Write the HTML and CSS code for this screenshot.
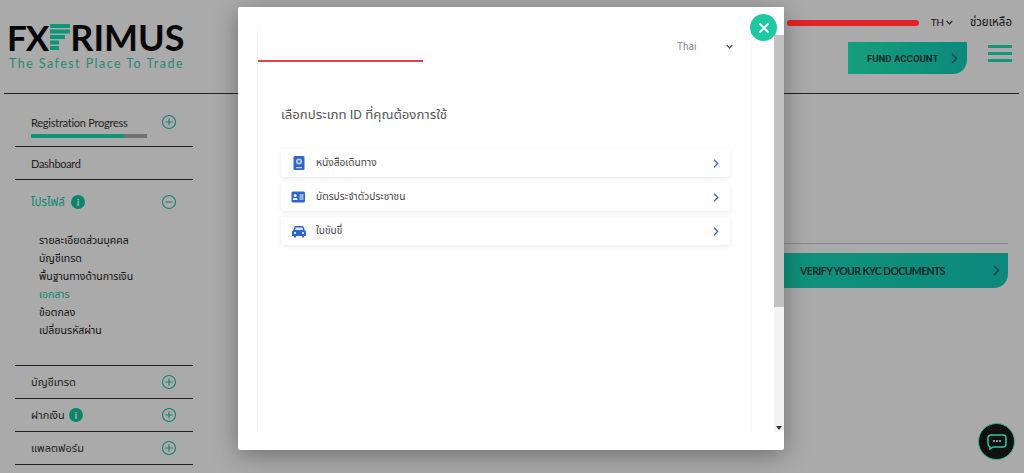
FILE: index.html
```html
<!DOCTYPE html>
<html lang="th">
<head>
<meta charset="utf-8">
<title>FXPRIMUS</title>
<link rel="stylesheet" href="styles.css">
</head>
<body>
<div class="page">
  <header class="topbar">
    <div class="logo">
      <div class="logo-mark">
        <span class="fx">FX</span>
        <svg class="logo-f" viewBox="0 0 20 26" width="20" height="26"><g fill="#17e0b4"><rect x="0" y="0" width="20" height="4"/><rect x="0" y="5.5" width="20" height="4"/><rect x="0" y="11" width="15" height="4"/><rect x="0" y="16.500" width="9" height="4"/><rect x="0" y="22" width="9" height="4"/></g></svg>
        <span class="rimus">RIMUS</span>
      </div>
      <div class="tagline">The Safest Place To Trade</div>
    </div>
    <div class="top-right">
      <div class="top-links">
        <span class="lang">TH <svg width="7" height="5" viewBox="0 0 7 5"><path d="M.7 1l2.800 2.800L6.300 1" fill="none" stroke="#333" stroke-width="1.200"/></svg></span>
        <span class="help">ช่วยเหลือ</span>
      </div>
      <div class="top-actions">
        <a class="fund">FUND ACCOUNT <svg width="7" height="11" viewBox="0 0 7 11"><path d="M1 1l4.500 4.500L1 10" fill="none" stroke="#0c6d72" stroke-width="1.500"/></svg></a>
        <div class="burger"><i></i><i></i><i></i></div>
      </div>
    </div>
  </header>
  <div class="body">
    <nav class="side">
      <div class="row row-progress">
        <div class="row-head"><span>Registration Progress</span><svg class="tog" viewBox="0 0 16 16"><circle cx="8" cy="8" r="6.500"/><path d="M4.500 8h7M8 4.500v7"/></svg></div>
        <div class="bar"><div class="bar-fill"></div></div>
      </div>
      <div class="row"><div class="row-head"><span class="dash">Dashboard</span></div></div>
      <div class="row row-open">
        <div class="row-head active"><span class="with-badge"><span class="wide">โปรไฟล์</span> <b class="badge">i</b></span><svg class="tog" viewBox="0 0 16 16"><circle cx="8" cy="8" r="6.500"/><path d="M4.500 8h7"/></svg></div>
        <ul class="sub">
          <li>รายละเอียดส่วนบุคคล</li>
          <li>บัญชีเทรด</li>
          <li>พื้นฐานทางด้านการเงิน</li>
          <li class="cur">เอกสาร</li>
          <li>ข้อตกลง</li>
          <li>เปลี่ยนรหัสผ่าน</li>
        </ul>
      </div>
      <div class="row"><div class="row-head"><span>บัญชีเทรด</span><svg class="tog" viewBox="0 0 16 16"><circle cx="8" cy="8" r="6.500"/><path d="M4.500 8h7M8 4.500v7"/></svg></div></div>
      <div class="row"><div class="row-head"><span class="with-badge">ฝากเงิน <b class="badge">i</b></span><svg class="tog" viewBox="0 0 16 16"><circle cx="8" cy="8" r="6.500"/><path d="M4.500 8h7M8 4.500v7"/></svg></div></div>
      <div class="row"><div class="row-head"><span>แพลตฟอร์ม</span><svg class="tog" viewBox="0 0 16 16"><circle cx="8" cy="8" r="6.500"/><path d="M4.500 8h7M8 4.500v7"/></svg></div></div>
    </nav>
    <main class="main">
      <div class="kyc-rule"></div>
      <div class="kyc"><span>VERIFY YOUR KYC DOCUMENTS</span> <svg width="7" height="11" viewBox="0 0 7 11"><path d="M1 1l4.500 4.500L1 10" fill="none" stroke="#0c6d72" stroke-width="1.600"/></svg></div>
    </main>
  </div>
</div>

<div class="overlay"></div>

<span class="scribble"></span>

<button class="chat" aria-label="chat"><svg width="20" height="16" viewBox="0 0 20 16"><path d="M4 1h12a3 3 0 0 1 3 3v6a3 3 0 0 1-3 3H6l-3 2v-2.300A3 3 0 0 1 1 10V4a3 3 0 0 1 3-3z" fill="none" stroke="#2fc79f" stroke-width="1.500"/><g fill="#cfd8d6"><circle cx="7" cy="7" r=".9"/><circle cx="10" cy="7" r=".9"/><circle cx="13" cy="7" r=".9"/></g></svg></button>

<section class="modal">
  <button class="close" aria-label="close"><svg width="12" height="12" viewBox="0 0 12 12"><path d="M1.500 1.500l9 9M10.500 1.500l-9 9" stroke="#fff" stroke-width="1.800" fill="none"/></svg></button>
  <div class="frame">
    <div class="doc">
      <div class="doc-top">
        <div class="doc-lang"><span>Thai</span><svg width="7" height="5" viewBox="0 0 7 5"><path d="M.7 1l2.800 2.800L6.300 1" fill="none" stroke="#444" stroke-width="1.200"/></svg></div>
        <div class="redline"></div>
      </div>
      <h1 class="title">เลือกประเภท ID ที่คุณต้องการใช้</h1>
      <ul class="choices">
        <li class="choice">
          <svg class="ic" width="16" height="16" viewBox="0 0 16 16"><rect x="2.500" y="1" width="11" height="14" rx="1.500" fill="#2f68c9"/><circle cx="8" cy="6.500" r="3" fill="#b9cdf0"/><circle cx="8" cy="6.500" r="1.200" fill="#2f68c9"/><rect x="5" y="12" width="6" height="1.300" fill="#b9cdf0"/></svg>
          <span>หนังสือเดินทาง</span>
          <svg class="chev" width="6" height="9" viewBox="0 0 6 9"><path d="M1 .8l3.700 3.700L1 8.200" fill="none" stroke="#2f68c9" stroke-width="1.300"/></svg>
        </li>
        <li class="choice">
          <svg class="ic" width="16" height="16" viewBox="0 0 16 16"><rect x="0.500" y="2.500" width="13.500" height="11" rx="1.500" fill="#2f68c9"/><circle cx="4.200" cy="6.500" r="1.500" fill="#fff"/><path d="M1.800 11c0-3 4.800-3 4.800 0z" fill="#fff"/><path d="M8.500 6h4M8.500 8h4M8.500 10h4" stroke="#fff" stroke-width="1"/></svg>
          <span>บัตรประจำตัวประชาชน</span>
          <svg class="chev" width="6" height="9" viewBox="0 0 6 9"><path d="M1 .8l3.700 3.700L1 8.200" fill="none" stroke="#2f68c9" stroke-width="1.300"/></svg>
        </li>
        <li class="choice">
          <svg class="ic" width="16" height="16" viewBox="0 0 16 16"><path d="M3.800 3h8.400l1.500 4.200c.8.300 1.300 1 1.300 1.800v4h-2v1.500h-2V13H5v1.500H3V13H1V9c0-.8.500-1.500 1.300-1.800z" fill="#2f68c9"/><path d="M4.800 4.500h6.400l.9 2.500H3.900z" fill="#dfe8f8"/><circle cx="4" cy="10" r="1" fill="#fff"/><circle cx="12" cy="10" r="1" fill="#fff"/></svg>
          <span>ใบขับขี่</span>
          <svg class="chev" width="6" height="9" viewBox="0 0 6 9"><path d="M1 .8l3.700 3.700L1 8.200" fill="none" stroke="#2f68c9" stroke-width="1.300"/></svg>
        </li>
      </ul>
    </div>
    <div class="scrollbar">
      <div class="sb-thumb"></div>
      <div class="sb-track"><svg width="6" height="4" viewBox="0 0 6 4"><path d="M0 0h6L3 4z" fill="#333"/></svg></div>
    </div>
  </div>
</section>
</body>
</html>
```
FILE: styles.css
```css
* { box-sizing: border-box; }
html, body { margin: 0; height: 473px; overflow: hidden; }
body {
  background: #fff;
  font-family: Lato, "Noto Sans", "Noto Sans Thai", "DejaVu Sans", sans-serif;
  color: #333;
  position: relative;
}
.page { width: 1024px; height: 473px; display: flex; flex-direction: column; }

.topbar {
  height: 94px;
  margin: 0 5px 0 4px;
  border-bottom: 1px solid #333;
  display: flex;
  justify-content: space-between;
  padding: 0 7px 0 3px;
  flex: none;
}
.logo { padding-top: 24px; width: 178px; }
.logo-mark {
  display: flex;
  align-items: center;
  height: 26px;
  font-family: Lato, sans-serif;
  font-weight: 700;
  font-size: 35px;
  line-height: 26px;
  color: #0b0b0b;
}
.fx { letter-spacing: -1px; }
.rimus { font-size: 36px; }
.logo-f { margin: 0 0 0 2px; flex: none; }
.tagline {
  margin: 7px 0 0 2px;
  font-size: 12.5px;
  line-height: 13px;
  letter-spacing: 1.45px;
  color: #3fcdb0;
  white-space: nowrap;
}
.top-right { width: 232px; display: flex; flex-direction: column; align-items: flex-end; }
.top-links { display: flex; align-items: center; height: 16px; margin-top: 14px; font-size: 10px; color: #222; }
.scribble {
  position: absolute; left: 787px; top: 20px;
  width: 132px; height: 6px;
  border-radius: 3px;
  background: #e8202a;
}
.lang { margin-right: 17px; white-space: nowrap; letter-spacing: -.3px; }
.lang svg { vertical-align: 1px; }
.help { white-space: nowrap; font-size: 11.500px; }
.top-actions { display: flex; align-items: flex-start; margin-top: 12px; }
.fund {
  width: 119px;
  height: 32px;
  display: flex;
  align-items: center;
  justify-content: space-between;
  padding: 0 9px 0 19px;
  background: linear-gradient(90deg, #20eebb, #12cdbb);
  border-bottom-right-radius: 14px;
  font: 700 9.600px Roboto, sans-serif;
  color: #03403c;
  white-space: nowrap;
}
.burger { margin: 3px 0 0 21px; width: 24px; display: flex; flex-direction: column; gap: 4px; }
.burger i { display: block; height: 3px; background: #1de2b4; }

.body { display: flex; flex: 1; min-height: 0; }
.side { width: 193px; padding: 17px 0 0 15px; flex: none; }
.row { border-bottom: 1px solid #333; height: 33px; }
.row-head {
  display: flex;
  justify-content: space-between;
  align-items: center;
  height: 32px;
  padding: 0 17px 0 16px;
  font-size: 11px;
  color: #333;
}
.dash { letter-spacing: -.3px; }
.row-progress { height: 36px; }
.row-progress .row-head { height: 22px; letter-spacing: -.25px; }
.row-open { height: 186px; }
.row-open .row-head { height: 44px; }
.tog { width: 16px; height: 16px; flex: none; fill: none; stroke: #17c9a3; stroke-width: 1.100; margin-right: -1px; }
.active { color: #17c9a3; }
.with-badge { display: inline-flex; align-items: center; gap: 4px; }
.wide { font-size: 11.600px; margin-right: 2px; }
.badge {
  width: 14px; height: 14px; border-radius: 50%;
  background: #12c99c; color: #fff;
  font: 900 10px/14px Lato, sans-serif;
  text-align: center; display: inline-block;
}
.bar { margin: 1px 46px 0 16px; height: 4px; background: #aaa; }
.bar-fill { width: 80%; height: 100%; background: #17e0b4; }
.sub { list-style: none; margin: 0; padding: 7px 0 0 24px; font-size: 10.500px; line-height: 18px; color: #222; }
.sub .cur { color: #17c9a3; }

.main { flex: 1; padding: 149px 16px 0 300px; }
.kyc-rule { height: 1px; background: #ccc; }
.kyc {
  height: 35px;
  margin-top: 9px;
  display: flex;
  align-items: center;
  justify-content: space-between;
  padding: 0 8px 0 307px;
  background: linear-gradient(90deg, #20eebb, #12cdbb);
  border-bottom-right-radius: 14px;
  font: 700 10.500px Lato, sans-serif;
  letter-spacing: -.6px;
  color: #03403c;
}

.overlay { position: absolute; inset: 0; background: rgba(0,0,0,.335); }

.chat {
  position: absolute; left: 978px; top: 423px;
  width: 37px; height: 37px; border-radius: 50%;
  background: #0d1110; border: 1px solid #2fb58f; padding: 0;
  display: flex; align-items: center; justify-content: center;
}

.modal {
  position: absolute; left: 238px; top: 7px;
  width: 546px; height: 443px;
  background: #fff;
  border-radius: 2px;
  box-shadow: 0 5px 25px rgba(0,0,0,.35);
}
.close {
  position: absolute; left: 512px; top: 7px;
  width: 27px; height: 27px; border-radius: 50%;
  border: 0; padding: 0;
  background: #1fc8a1;
  display: flex; align-items: center; justify-content: center;
  z-index: 2;
}
.frame { height: 425px; display: flex; padding-left: 19px; }
.doc { flex: 1; position: relative; border-left: 1px solid #f5f5f5; margin-top: 19px; margin-right: 22px; border-right: 1px solid #f7f7f7; padding: 0 21px 0 23px; }
.doc-top { position: relative; height: 36px; margin: 0 -21px 0 -23px; }
.doc-lang {
  position: absolute; right: 18px; top: 15px;
  width: 56px;
  display: flex; justify-content: space-between; align-items: center;
  font: 400 10px Roboto, sans-serif; color: #888;
}
.redline { position: absolute; left: 0; top: 34px; width: 165px; height: 2px; background: #e8404a; }
.title { margin: 43px 0 0; font-family: Roboto, "Noto Sans Thai", sans-serif; font-weight: 400; font-size: 13.200px; line-height: 20px; color: #555; }
.choices { list-style: none; margin: 24px 0 0; padding: 0; display: flex; flex-direction: column; gap: 6px; }
.choice {
  height: 28px;
  display: flex; align-items: center;
  padding: 0 11px 0 10px;
  background: #fff;
  border-radius: 2px;
  box-shadow: 0 1px 4px rgba(0,0,0,.1);
  font-size: 10.200px;
  color: #444;
}
.choice .ic { margin-right: 9px; flex: none; }
.choice span { flex: 1; }
.scrollbar { width: 10px; flex: none; display: flex; flex-direction: column; padding-top: 28px; background: #fff; }
.sb-thumb { height: 272px; background: #c1c1c1; }
.sb-track { flex: 1; background: #f4f4f4; display: flex; align-items: flex-end; justify-content: center; padding-bottom: 2px; }
```
